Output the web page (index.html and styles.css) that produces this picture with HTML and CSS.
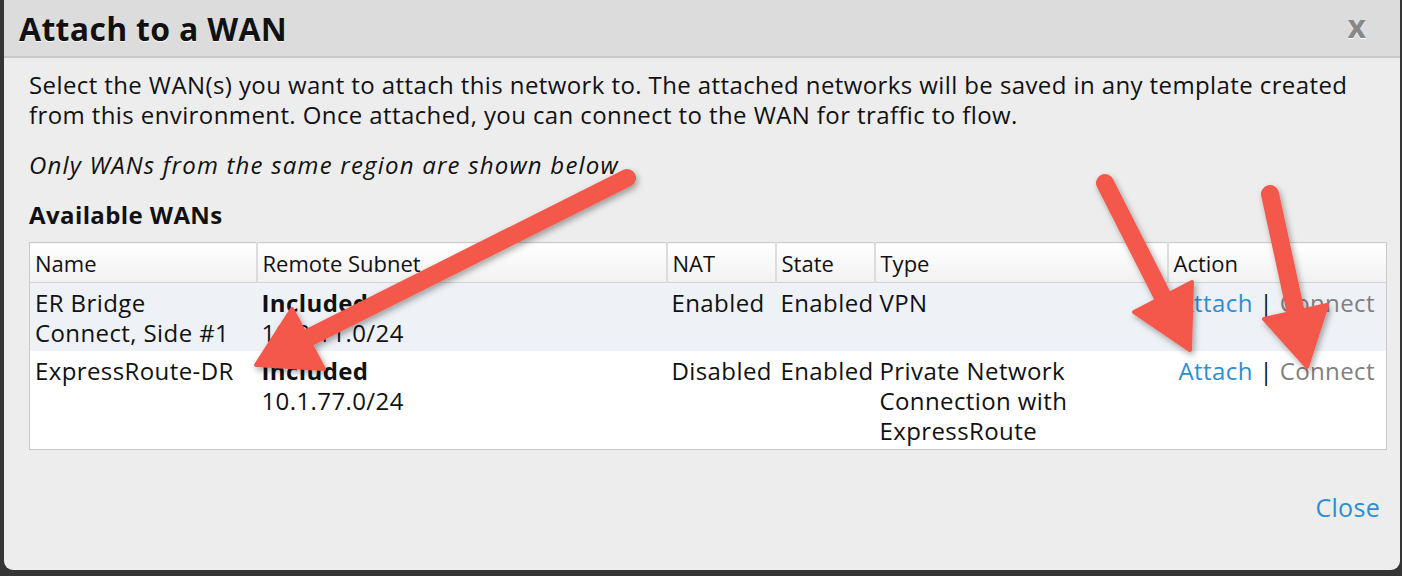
FILE: index.html
```html
<!DOCTYPE html>
<html>
<head>
<meta charset="utf-8">
<title>Attach to a WAN</title>
<link rel="stylesheet" href="styles.css">
</head>
<body>
<div class="modal">
  <div class="modal-header">
    <h1 class="title">Attach to a WAN</h1>
    <span class="close-x">x</span>
  </div>
  <div class="modal-body">
    <p class="intro">Select the WAN(s) you want to attach this network to. The attached networks will be saved in any template created from this environment. Once attached, you can connect to the WAN for traffic to flow.</p>
    <p class="note">Only WANs from the same region are shown below</p>
    <h2 class="section">Available WANs</h2>
    <table class="wans">
      <thead>
        <tr>
          <th class="c-name">Name</th>
          <th class="c-subnet">Remote Subnet</th>
          <th class="c-nat">NAT</th>
          <th class="c-state">State</th>
          <th class="c-type">Type</th>
          <th class="c-action">Action</th>
        </tr>
      </thead>
      <tbody>
        <tr class="odd">
          <td>ER Bridge<br>Connect, Side #1</td>
          <td><b>Included</b><br>10.0.11.0/24</td>
          <td>Enabled</td>
          <td>Enabled</td>
          <td>VPN</td>
          <td class="action"><a class="link">Attach</a> | <span class="muted">Connect</span></td>
        </tr>
        <tr>
          <td>ExpressRoute-DR</td>
          <td><b>Included</b><br>10.1.77.0/24</td>
          <td>Disabled</td>
          <td>Enabled</td>
          <td>Private Network<br>Connection with<br>ExpressRoute</td>
          <td class="action"><a class="link">Attach</a> | <span class="muted">Connect</span></td>
        </tr>
      </tbody>
    </table>
    <div class="footer"><a class="link close-link">Close</a></div>
  </div>
</div>
<svg class="annotations" width="1402" height="576" viewBox="0 0 1402 576">
  <defs>
    <filter id="sh" x="-20%" y="-20%" width="140%" height="140%">
      <feDropShadow dx="2" dy="3" stdDeviation="3" flood-color="#000" flood-opacity="0.35"/>
    </filter>
  </defs>
  <g filter="url(#sh)" fill="#f4584b" stroke="#f4584b" stroke-linejoin="round" stroke-linecap="round">
    <line x1="627" y1="178" x2="300" y2="342" stroke-width="18"/>
    <polygon points="256,365 292,309 324,369" stroke-width="4"/>
  </g>
  <g filter="url(#sh)" fill="#f4584b" stroke="#f4584b" stroke-linejoin="round" stroke-linecap="round">
    <line x1="1105" y1="183" x2="1166" y2="303" stroke-width="18"/>
    <polygon points="1190,350 1134,312 1192,282" stroke-width="4"/>
  </g>
  <g filter="url(#sh)" fill="#f4584b" stroke="#f4584b" stroke-linejoin="round" stroke-linecap="round">
    <line x1="1270" y1="194" x2="1297" y2="318" stroke-width="18"/>
    <polygon points="1307,367 1264,319 1327,305" stroke-width="4"/>
  </g>
</svg>
</body>
</html>
```
FILE: styles.css
```css
html, body {
  margin: 0;
  padding: 0;
}
body {
  background: #353535;
  width: 1402px;
  height: 576px;
  overflow: hidden;
  position: relative;
  font-family: "Open Sans", "Liberation Sans", sans-serif;
  color: #111;
}
.modal {
  margin-left: 4px;
  width: 1396px;
  height: 570px;
  background: #ededed;
  border-radius: 0 0 9px 9px;
  overflow: hidden;
}
.modal-header {
  height: 56px;
  background: #dcdcdc;
  border-bottom: 2px solid #c8c8c8;
  display: flex;
  align-items: center;
  justify-content: space-between;
  padding: 0 34px 0 15px;
}
.title {
  margin: 0;
  font-size: 32px;
  font-weight: 700;
  color: #111;
  text-shadow: 0 1px 0 #fff;
  letter-spacing: 0.3px;
}
.close-x {
  font-size: 32px;
  font-weight: 700;
  color: #888;
  text-shadow: 0 1px 0 #fff;
  margin-top: -6px;
}
.modal-body {
  padding: 12px 13px 0 25px;
  font-size: 24px;
  line-height: 30px;
  letter-spacing: 0.4px;
}
.intro {
  margin: 0;
}
.note {
  margin: 20px 0 0;
  font-style: italic;
  letter-spacing: 1.2px;
}
.section {
  margin: 20px 0 0;
  font-size: 24px;
  font-weight: 700;
}
.wans {
  margin-top: 12px;
  width: 1358px;
  border-collapse: collapse;
  border: 1px solid #c9c9c9;
  background: #fff;
  table-layout: fixed;
}
.wans th {
  box-sizing: border-box;
  font-size: 22px;
  letter-spacing: 0;
  font-weight: 400;
  text-align: left;
  height: 40px;
  padding: 0 5px;
  background: linear-gradient(#ffffff, #f1f1f1);
  border-bottom: 1px solid #d2d2d2;
  border-left: 2px solid #dcdcdc;
  vertical-align: middle;
}
.wans th:first-child {
  border-left: none;
}
.wans td {
  vertical-align: top;
  padding: 5px 5px 3px;
  text-align: left;
  white-space: nowrap;
}
.wans tr.odd td {
  background: #eef1f6;
}
.c-name { width: 227px; }
.c-subnet { width: 410px; }
.c-nat { width: 109px; }
.c-state { width: 99px; }
.c-type { width: 293px; }
.wans td.action {
  text-align: center;
  padding-left: 0;
  padding-right: 0;
}
.link {
  color: #2b8fd2;
  text-decoration: none;
}
.muted {
  color: #808080;
}
.footer {
  margin-top: 42px;
  display: flex;
  justify-content: flex-end;
  padding-right: 7px;
}
.close-link {
  font-size: 25px;
  letter-spacing: 0.3px;
}
.annotations {
  position: absolute;
  left: 0;
  top: 0;
  pointer-events: none;
}
```
